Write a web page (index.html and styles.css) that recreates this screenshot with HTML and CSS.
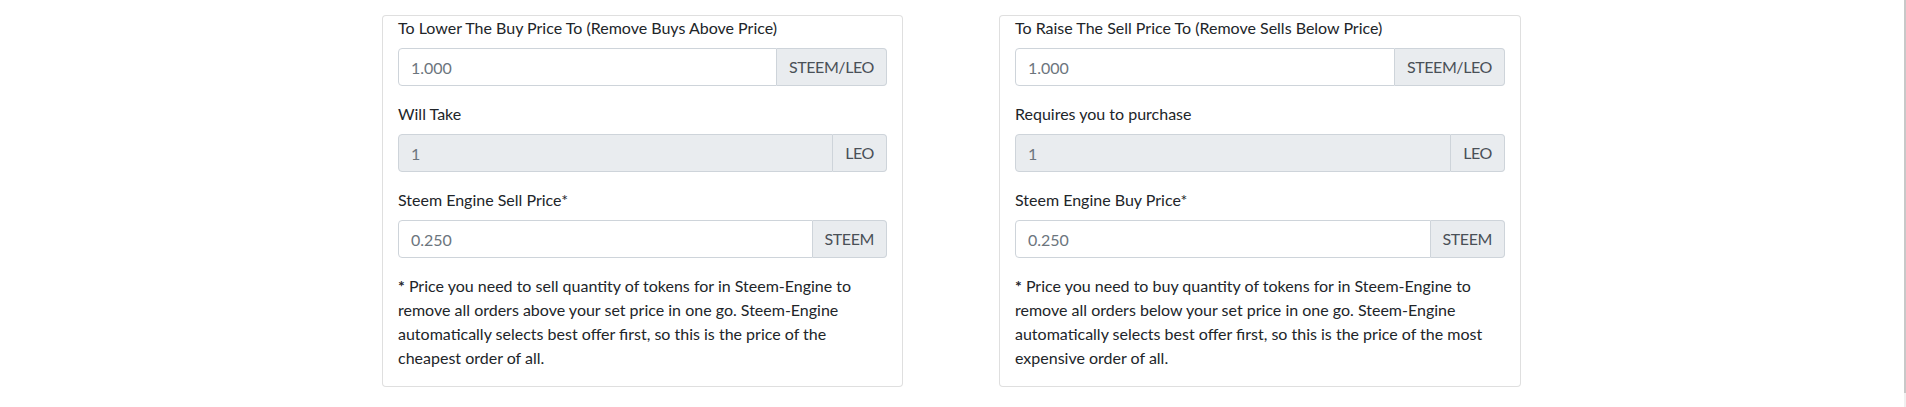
FILE: index.html
```html
<!DOCTYPE html>
<html lang="en">
<head>
<meta charset="utf-8">
<title>Steem-Engine order calculator</title>
<link rel="stylesheet" href="styles.css">
</head>
<body>
<div class="page">
  <main class="container">
    <section class="card card-left">
      <div class="form-group">
        <label class="label">To Lower The Buy Price To (Remove Buys Above Price)</label>
        <div class="input-group">
          <input class="form-control" type="text" placeholder="1.000">
          <span class="addon">STEEM/LEO</span>
        </div>
      </div>
      <div class="form-group">
        <label class="label">Will Take</label>
        <div class="input-group">
          <input class="form-control" type="text" placeholder="1" disabled>
          <span class="addon">LEO</span>
        </div>
      </div>
      <div class="form-group">
        <label class="label">Steem Engine Sell Price*</label>
        <div class="input-group">
          <input class="form-control" type="text" placeholder="0.250">
          <span class="addon">STEEM</span>
        </div>
      </div>
      <p class="note"><b>*</b> Price you need to sell quantity of tokens for in Steem-Engine to remove all orders above your set price in one go. Steem-Engine automatically selects best offer first, so this is the price of the cheapest order of all.</p>
    </section>
    <section class="card card-right">
      <div class="form-group">
        <label class="label">To Raise The Sell Price To (Remove Sells Below Price)</label>
        <div class="input-group">
          <input class="form-control" type="text" placeholder="1.000">
          <span class="addon">STEEM/LEO</span>
        </div>
      </div>
      <div class="form-group">
        <label class="label">Requires you to purchase</label>
        <div class="input-group">
          <input class="form-control" type="text" placeholder="1" disabled>
          <span class="addon">LEO</span>
        </div>
      </div>
      <div class="form-group">
        <label class="label">Steem Engine Buy Price*</label>
        <div class="input-group">
          <input class="form-control" type="text" placeholder="0.250">
          <span class="addon">STEEM</span>
        </div>
      </div>
      <p class="note"><b>*</b> Price you need to buy quantity of tokens for in Steem-Engine to remove all orders below your set price in one go. Steem-Engine automatically selects best offer first, so this is the price of the most expensive order of all.</p>
    </section>
  </main>
  <div class="scrollbar"><div class="thumb"></div></div>
</div>
</body>
</html>
```

FILE: styles.css
```css
* { box-sizing: border-box; }
html, body { margin: 0; padding: 0; }
body {
  background: #fff;
  font-family: Lato, "Liberation Sans", sans-serif;
  font-size: 16px;
  line-height: 1.5;
  color: #212529;
}
.page {
  display: flex;
  height: 407px;
}
.container {
  flex: 1;
  display: flex;
  align-items: flex-start;
  padding: 15px 0 0 382px;
  gap: 96px;
}
.card {
  flex: none;
  border: 1px solid rgba(0,0,0,.125);
  border-radius: 4px;
  padding: 0 15px;
  background: #fff;
}
.card-left { width: 521px; }
.card-right { width: 522px; }
.form-group { margin-bottom: 16px; }
.label {
  display: block;
  margin-bottom: 8px;
}
.input-group {
  display: flex;
  height: 38px;
}
.form-control {
  flex: 1;
  min-width: 0;
  height: 38px;
  padding: 6px 12px;
  font: inherit;
  color: #495057;
  border: 1px solid #ced4da;
  border-radius: 4px 0 0 4px;
  background: #fff;
}
.form-control::placeholder { color: #6c757d; }
.form-control:disabled { background: #e9ecef; }
.addon {
  display: flex;
  align-items: center;
  padding: 6px 12px;
  color: #495057;
  background: #e9ecef;
  border: 1px solid #ced4da;
  border-left: 0;
  border-radius: 0 4px 4px 0;
  letter-spacing: -0.4px;
}
.note {
  margin: 0 0 16px;
}
.note b { font-weight: 700; }
.scrollbar {
  width: 2px;
  display: flex;
  flex-direction: column;
  background: #f0f0f0;
}
.thumb {
  height: 393px;
  background: #c8c8c8;
}
```
